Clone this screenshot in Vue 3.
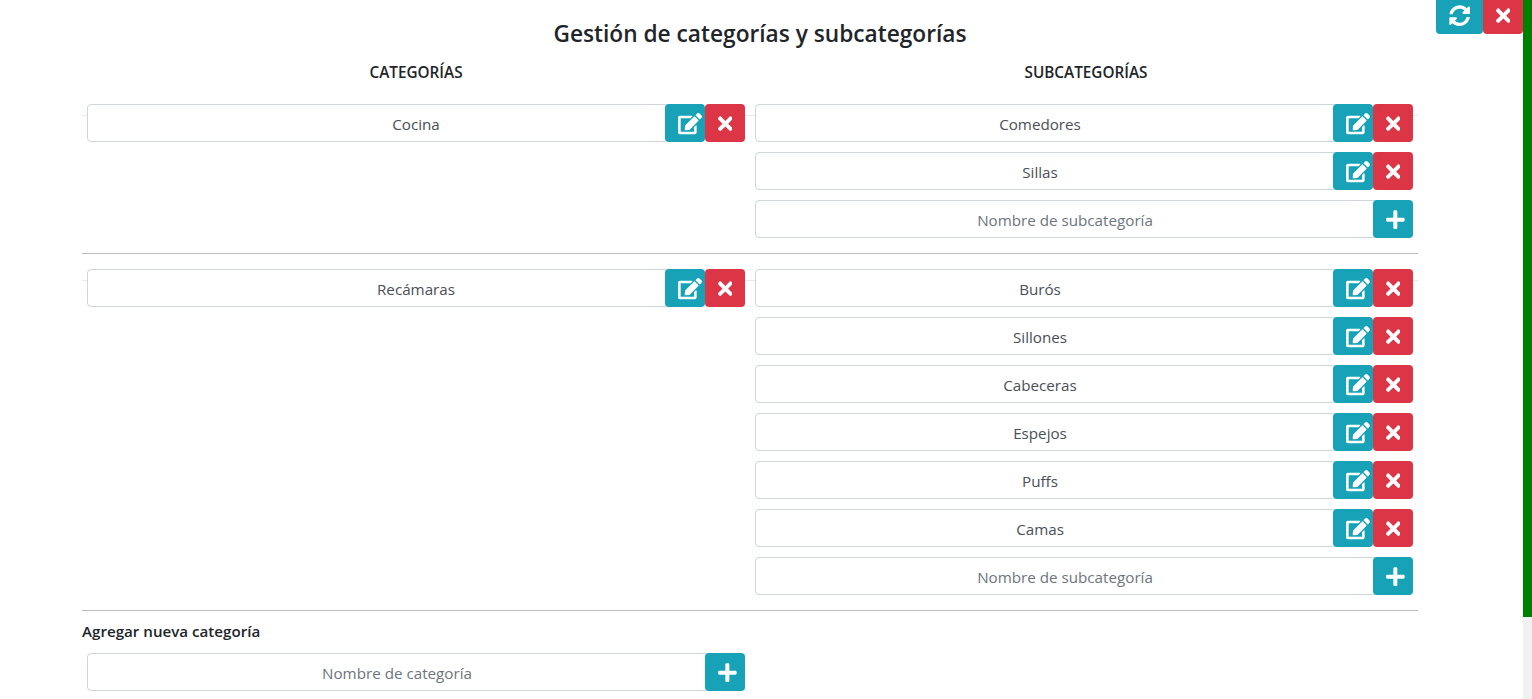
<template>
  <div class="page">
    <main class="content">
      <div class="top-actions">
        <button class="btn info wide" type="button">
          <svg class="ico" viewBox="0 0 512 512"><path :d="icons.sync" /></svg>
        </button>
        <button class="btn danger" type="button">
          <svg class="ico" viewBox="0 0 352 512"><path :d="icons.times" /></svg>
        </button>
      </div>

      <h4 class="title">Gestión de categorías y subcategorías</h4>

      <div class="manager">
        <div class="columns heads">
          <h6>CATEGORÍAS</h6>
          <h6 class="sub-head">SUBCATEGORÍAS</h6>
        </div>

        <section v-for="c in categories" :key="c.name" class="columns category">
          <div class="col">
            <div class="group">
              <input class="field cat-field" type="text" :value="c.name" />
              <button class="btn info" type="button">
                <svg class="ico edit" viewBox="0 0 576 512"><path :d="icons.edit" /></svg>
              </button>
              <button class="btn danger" type="button">
                <svg class="ico" viewBox="0 0 352 512"><path :d="icons.times" /></svg>
              </button>
            </div>
          </div>
          <div class="col">
            <div v-for="s in c.subs" :key="s" class="group">
              <input class="field sub-field" type="text" :value="s" />
              <button class="btn info" type="button">
                <svg class="ico edit" viewBox="0 0 576 512"><path :d="icons.edit" /></svg>
              </button>
              <button class="btn danger" type="button">
                <svg class="ico" viewBox="0 0 352 512"><path :d="icons.times" /></svg>
              </button>
            </div>
            <div class="group">
              <input class="field" type="text" placeholder="Nombre de subcategoría" />
              <button class="btn info" type="button">
                <svg class="ico plus" viewBox="0 0 448 512"><path :d="icons.plus" /></svg>
              </button>
            </div>
          </div>
        </section>

        <h6 class="add-label">Agregar nueva categoría</h6>
        <div class="columns">
          <div class="col">
            <div class="group">
              <input class="field" type="text" placeholder="Nombre de categoría" />
              <button class="btn info" type="button">
                <svg class="ico plus" viewBox="0 0 448 512"><path :d="icons.plus" /></svg>
              </button>
            </div>
          </div>
        </div>
      </div>
    </main>
    <div class="scrollbar"><div class="thumb"></div></div>
  </div>
</template>

<script setup>
const categories = [
  { name: 'Cocina', subs: ['Comedores', 'Sillas'] },
  { name: 'Recámaras', subs: ['Burós', 'Sillones', 'Cabeceras', 'Espejos', 'Puffs', 'Camas'] }
]

const icons = {
  edit: 'M402.6 83.2l90.2 90.2c3.8 3.8 3.8 10 0 13.8L274.4 405.6l-92.8 10.3c-12.4 1.4-22.9-9.1-21.5-21.5l10.3-92.8L388.8 83.2c3.8-3.8 10-3.8 13.8 0zm162-22.9l-48.8-48.8c-15.2-15.2-39.9-15.2-55.2 0l-35.4 35.4c-3.8 3.8-3.8 10 0 13.8l90.2 90.2c3.8 3.8 10 3.8 13.8 0l35.4-35.4c15.2-15.3 15.2-40 0-55.2zM384 346.2V448H64V128h229.8c3.2 0 6.2-1.3 8.5-3.5l40-40c7.6-7.6 2.2-20.5-8.5-20.5H48C21.5 64 0 85.5 0 112v352c0 26.5 21.5 48 48 48h352c26.5 0 48-21.5 48-48V306.2c0-10.7-12.9-16-20.5-8.5l-40 40c-2.2 2.3-3.5 5.3-3.5 8.5z',
  times: 'M242.72 256l100.07-100.07c12.28-12.28 12.28-32.19 0-44.48l-22.24-22.24c-12.28-12.28-32.19-12.28-44.48 0L176 189.28 75.93 89.21c-12.28-12.28-32.19-12.28-44.48 0L9.21 111.45c-12.28 12.28-12.28 32.19 0 44.48L109.28 256 9.21 356.07c-12.28 12.28-12.28 32.19 0 44.48l22.24 22.24c12.28 12.28 32.2 12.28 44.48 0L176 322.72l100.07 100.07c12.28 12.28 32.2 12.28 44.48 0l22.24-22.24c12.28-12.28 12.28-32.19 0-44.48L242.72 256z',
  plus: 'M416 208H272V64c0-17.67-14.33-32-32-32h-32c-17.67 0-32 14.33-32 32v144H32c-17.67 0-32 14.33-32 32v32c0 17.67 14.33 32 32 32h144v144c0 17.67 14.33 32 32 32h32c17.67 0 32-14.33 32-32V304h144c17.67 0 32-14.33 32-32v-32c0-17.67-14.33-32-32-32z',
  sync: 'M370.72 133.28C339.458 104.008 298.888 87.962 255.848 88c-77.458.068-144.328 53.178-162.791 126.85-1.344 5.363-6.122 9.15-11.651 9.15H24.103c-7.498 0-13.194-6.807-11.807-14.176C33.933 94.924 134.813 8 256 8c66.448 0 126.791 26.136 171.315 68.685L463.03 40.97C478.149 25.851 504 36.559 504 57.941V192c0 13.255-10.745 24-24 24H345.941c-21.382 0-32.09-25.851-16.971-40.971l41.75-41.749zM32 296h134.059c21.382 0 32.09 25.851 16.971 40.971l-41.75 41.75c31.262 29.273 71.835 45.319 114.876 45.28 77.418-.07 144.315-53.144 162.787-126.849 1.344-5.363 6.122-9.15 11.651-9.15h57.304c7.498 0 13.194 6.807 11.807 14.176C478.067 417.076 377.187 504 256 504c-66.448 0-126.791-26.136-171.315-68.685L48.97 471.03C33.851 486.149 8 475.441 8 454.059V320c0-13.255 10.745-24 24-24z'
}
</script>

<style>
html, body { overflow: hidden; background: #fff; }
</style>

<style scoped>
.page {
  display: flex;
  height: 699px;
  overflow: hidden;
  font-family: "Open Sans", "Noto Sans", sans-serif;
  color: #212529;
}
.content {
  position: relative;
  flex: 1;
  min-width: 0;
}
.scrollbar {
  width: 9px;
  background: #f1f1f1;
}
.thumb {
  height: 617px;
  background: #008000;
}

.top-actions {
  position: absolute;
  top: -4px;
  right: 0;
  display: flex;
}

.title {
  margin: 0;
  padding: 19px 3px 0 0;
  font-size: 22.7px;
  line-height: 29px;
  font-weight: 600;
  text-align: center;
}

.manager {
  width: 1336px;
  margin-left: 82px;
}
.columns {
  display: grid;
  grid-template-columns: 668px 668px;
}
.heads {
  padding-top: 16px;
  height: 56px;
  box-sizing: border-box;
}
.heads h6 {
  margin: 0;
  font-size: 15.3px;
  line-height: 17px;
  font-weight: 600;
  text-align: center;
}
.heads .sub-head { padding-left: 4px; }

.category {
  position: relative;
  padding-bottom: 5px;
  margin-bottom: 15px;
  border-bottom: 1px solid #bdbdbd;
}
.category::before {
  content: '';
  position: absolute;
  top: 11px;
  left: 0;
  right: 0;
  height: 1px;
  background: #e8e8e8;
}
.col {
  position: relative;
  padding: 0 5px;
}
.group {
  display: flex;
  height: 38px;
  margin-bottom: 10px;
}
.field {
  flex: 1;
  min-width: 0;
  box-sizing: border-box;
  height: 38px;
  margin-right: -4px;
  padding: 7px 14px 5px 12px;
  border: 1px solid #ced4da;
  border-radius: 4px;
  background: #fff;
  color: #495057;
  font-family: inherit;
  font-size: 15.2px;
  text-align: center;
  outline: none;
}
.field::placeholder { color: #6c757d; opacity: 1; }
.cat-field { padding-left: 90px; }
.sub-field { padding-right: 24px; }

.btn {
  position: relative;
  display: flex;
  align-items: center;
  justify-content: center;
  flex: none;
  width: 40px;
  height: 38px;
  padding: 0;
  border: 0;
  border-radius: 4px;
  color: #fff;
}
.btn.wide { width: 47px; }
.info { background: #17a2b8; }
.danger { background: #dc3545; }
.ico {
  display: block;
  height: 21.33px;
  margin-top: 2px;
  fill: currentColor;
  flex: none;
}
.ico.edit { margin-left: 10px; }
.ico.plus { margin-left: 5px; }

.add-label {
  margin: -3px 0 13px;
  font-size: 15.15px;
  line-height: 17px;
  font-weight: 600;
}
</style>
